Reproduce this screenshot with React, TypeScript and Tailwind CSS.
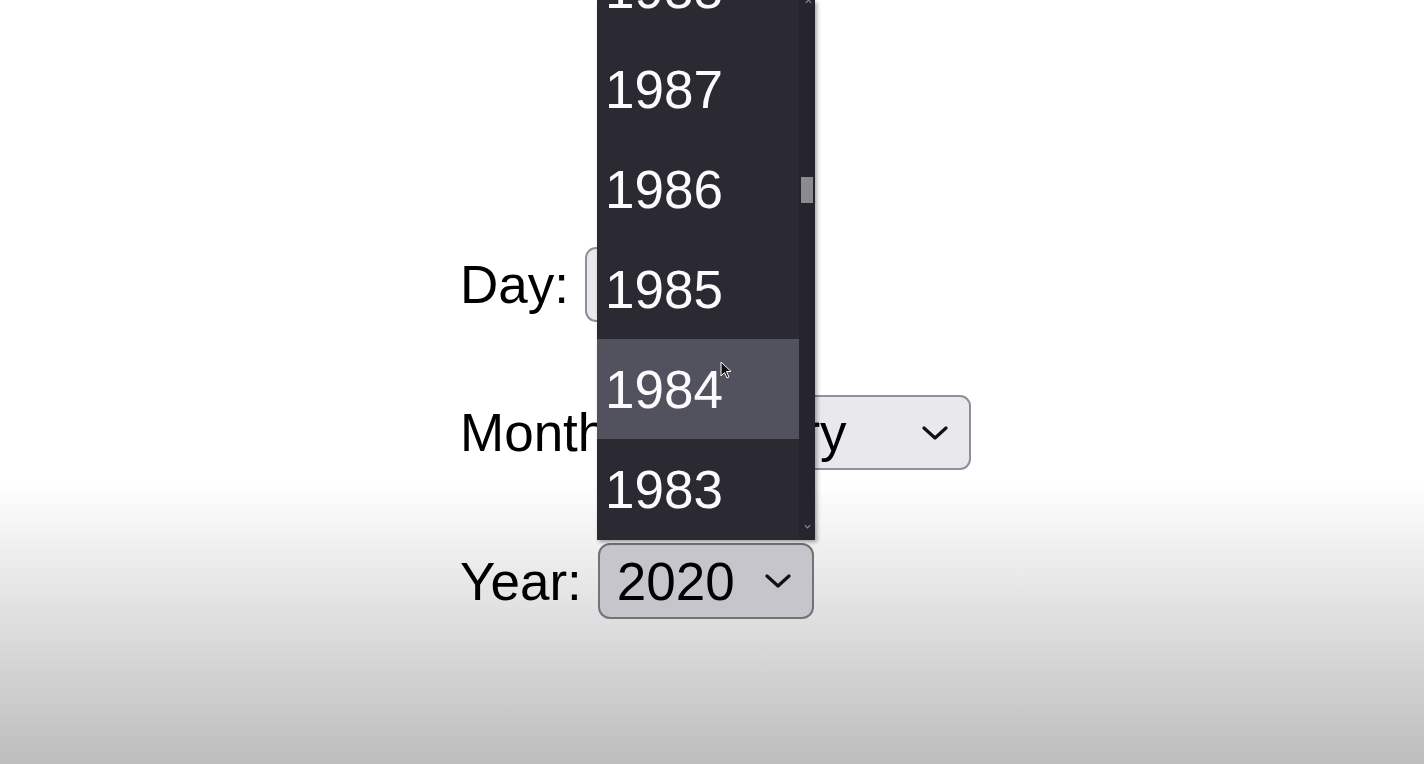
import React from "react";

const font = { fontFamily: '"Liberation Sans", Arial, sans-serif' };

function Chevron({ className }: { className?: string }) {
  return (
    <svg viewBox="0 0 26 14" className={className} fill="none">
      <path d="M2 2 L13 12 L24 2" stroke="#111" strokeWidth="3.2" strokeLinecap="round" strokeLinejoin="round" />
    </svg>
  );
}

const years = ["1988", "1987", "1986", "1985", "1984", "1983"];

export default function App() {
  return (
    <div
      className="relative h-[764px] w-[1424px] overflow-hidden bg-[linear-gradient(to_bottom,#ffffff_0%,#ffffff_63%,#bdbdbd_100%)] text-[53px] leading-none text-black"
      style={font}
    >
      <div className="flex flex-col gap-[73px] pl-[460px] pt-[247px]">
        <div className="flex h-[75px] items-center gap-[16px]">
          <span>Day:</span>
          <div className="flex h-[75px] w-[150px] items-center rounded-[11px] border-2 border-[#8f8f9d] bg-[#e9e9ed] px-[18px]" />
        </div>
        <div className="flex h-[75px] items-center gap-[16px]">
          <span>Month:</span>
          <div className="flex h-[75px] w-[333px] items-center justify-between rounded-[11px] border-2 border-[#8f8f9d] bg-[#e9e9ed] pl-[18px] pr-[21px]">
            <span>January</span>
            <Chevron className="h-[14px] w-[26px]" />
          </div>
        </div>
        <div className="flex h-[76px] items-center gap-[16px]">
          <span>Year:</span>
          <div className="flex h-[76px] w-[216px] items-center justify-between rounded-[12px] border-2 border-[#727277] bg-[#c6c5cb] pl-[17px] pr-[21px]">
            <span>2020</span>
            <Chevron className="h-[14px] w-[26px]" />
          </div>
        </div>
      </div>

      {/* open dropdown list */}
      <div className="absolute left-[597px] top-0 flex h-[540px] w-[218px] overflow-hidden bg-[#2b2a33] shadow-[2px_2px_4px_rgba(0,0,0,0.35)]">
        <div className="flex w-[202px] flex-col">
          <div className="-mt-[61px] flex flex-col">
            {years.map((y) => (
              <div
                key={y}
                className={`flex h-[100px] items-center pl-[8px] text-[#fbfbfe] ${y === "1984" ? "bg-[#52525e]" : ""}`}
              >
                {y}
              </div>
            ))}
          </div>
        </div>
        <div className="relative w-[16px] bg-[#26252d]">
          <svg viewBox="0 0 8 5" className="absolute left-[6px] top-[-1px] h-[5px] w-[7px]" fill="none">
            <path d="M1 4 L4 1 L7 4" stroke="#8a8a90" strokeWidth="1.4" />
          </svg>
          <div className="absolute left-[2px] top-[177px] h-[26px] w-[12px] bg-[#8b8a90]" />
          <svg viewBox="0 0 8 5" className="absolute left-[5px] top-[524px] h-[5px] w-[7px]" fill="none">
            <path d="M1 1 L4 4 L7 1" stroke="#8a8a90" strokeWidth="1.4" />
          </svg>
        </div>
      </div>

      {/* mouse cursor */}
      <svg viewBox="0 0 12 19" className="absolute left-[720px] top-[361px] h-[19px] w-[12px]">
        <path d="M1 1 L1 15 L4.5 11.5 L7 17 L9 16 L6.5 10.5 L11 10.5 Z" fill="#111" stroke="#fff" strokeWidth="1" strokeLinejoin="round" />
      </svg>
    </div>
  );
}
